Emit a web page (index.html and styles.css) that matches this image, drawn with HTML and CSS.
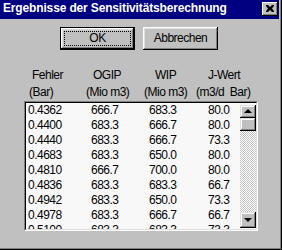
FILE: index.html
```html
<!DOCTYPE html>
<html lang="de">

<head>
    <meta charset="UTF-8">
    <title>Ergebnisse der Sensitivitätsberechnung</title>
    <link rel="stylesheet" href="styles.css">
</head>

<body>
    <div class="window">
        <div class="titlebar">
            <span class="title">Ergebnisse der Sensitivitätsberechnung</span>
            <span class="close">
                <svg width="8" height="7" viewBox="0 0 8 7">
                    <path d="M0 0h2l2 2 2-2h2v1l-2 2.5 2 2.5v1h-2l-2-2-2 2h-2v-1l2-2.5-2-2.5z" fill="#000"/>
                </svg>
            </span>
        </div>

        <div class="content">
            <div class="buttons">
                <button class="btn default"><span class="focus">OK</span></button>
                <button class="btn">Abbrechen</button>
            </div>

            <div class="headers">
                <div class="h1c">Fehler</div>
                <div class="h2c">OGIP</div>
                <div class="h3c">WIP</div>
                <div class="h4c">J-Wert</div>
                <div class="u1c">(Bar)</div>
                <div class="u2c">(Mio m3)</div>
                <div class="u3c">(Mio m3)</div>
                <div class="u4c">(m3/d&nbsp; Bar)</div>
            </div>

            <div class="listbox">
                <div class="list-inner">
                    <div class="rows">
                        <div class="row"><span>0.4362</span><span>666.7</span><span>683.3</span><span>80.0</span></div>
                        <div class="row"><span>0.4400</span><span>683.3</span><span>666.7</span><span>80.0</span></div>
                        <div class="row"><span>0.4440</span><span>683.3</span><span>666.7</span><span>73.3</span></div>
                        <div class="row"><span>0.4683</span><span>683.3</span><span>650.0</span><span>80.0</span></div>
                        <div class="row"><span>0.4810</span><span>666.7</span><span>700.0</span><span>80.0</span></div>
                        <div class="row"><span>0.4836</span><span>683.3</span><span>683.3</span><span>66.7</span></div>
                        <div class="row"><span>0.4942</span><span>683.3</span><span>650.0</span><span>73.3</span></div>
                        <div class="row"><span>0.4978</span><span>683.3</span><span>666.7</span><span>66.7</span></div>
                        <div class="row"><span>0.5100</span><span>683.3</span><span>683.3</span><span>73.3</span></div>
                    </div>
                    <div class="scrollbar">
                        <div class="sb-btn"><span class="arrow up"></span></div>
                        <div class="sb-thumb"></div>
                        <div class="sb-track"></div>
                        <div class="sb-btn down-btn"><span class="arrow down"></span></div>
                    </div>
                </div>
            </div>
        </div>
    </div>
</body>

</html>
```

FILE: styles.css
```css
* {
    box-sizing: border-box;
}

body {
    margin: 0;
    width: 282px;
    height: 250px;
    overflow: hidden;
    background: #c0c0c0;
    font-family: "Liberation Sans", Arial, sans-serif;
    font-size: 12px;
    letter-spacing: -0.5px;
    color: #000;
}

.window {
    width: 282px;
    height: 250px;
    background: #c0c0c0;
    border-right: 1px solid #000;
    border-bottom: 1px solid #000;
    padding-right: 1px;
    padding-bottom: 1px;
    box-shadow: inset -1px -1px #808080;
    display: flex;
    flex-direction: column;
}

.titlebar {
    height: 19px;
    margin-right: 1px;
    background: #000080;
    color: #fff;
    display: flex;
    align-items: flex-start;
    justify-content: space-between;
}

.title {
    font-weight: bold;
    line-height: 16px;
    letter-spacing: -0.15px;
    padding-left: 3px;
}

.close {
    width: 16px;
    height: 14px;
    margin-top: 2px;
    margin-right: 1px;
    background: #c0c0c0;
    box-shadow: inset -1px -1px #000, inset 1px 1px #fff, inset -2px -2px #808080;
    display: flex;
    align-items: center;
    justify-content: center;
    padding-bottom: 1px;
}

.content {
    flex: 1;
    display: flex;
    flex-direction: column;
}

.buttons {
    display: flex;
    justify-content: center;
    gap: 8px;
    margin-top: 8px;
    padding-right: 2px;
}

.btn {
    width: 75px;
    height: 23px;
    padding: 0 0 2px;
    font: inherit;
    letter-spacing: inherit;
    color: #000;
    background: #c0c0c0;
    border: none;
    box-shadow: inset -1px -1px #000, inset 1px 1px #fff, inset -2px -2px #808080, inset 2px 2px #dfdfdf;
}

.btn.default {
    border: 1px solid #000;
    padding: 3px;
}

.focus {
    display: flex;
    align-items: center;
    justify-content: center;
    height: 100%;
    border: 1px dotted #000;
    padding-bottom: 1px;
}

.headers {
    display: grid;
    grid-template-columns: 60px 60px 52px 62px;
    grid-auto-rows: 17px;
    line-height: 17px;
    margin-top: 17px;
    margin-left: 24px;
    white-space: nowrap;
}

.h1c { padding-left: 8px; }
.h2c { padding-left: 9px; }
.h3c { padding-left: 11px; }
.h4c { padding-left: 12px; }
.u1c { padding-left: 5px; }
.u2c { padding-left: 2px; }
.u3c { padding-left: 0; }
.u4c { padding-left: 0; }

.listbox {
    width: 234px;
    height: 130px;
    margin-left: 24px;
    margin-top: 0;
    border: 1px solid;
    border-color: #808080 #fff #fff #808080;
}

.list-inner {
    height: 100%;
    border: 1px solid;
    border-color: #000 #dfdfdf #dfdfdf #000;
    background: #f8f8f8;
    display: flex;
    overflow: hidden;
}

.rows {
    flex: 1;
    padding-left: 2px;
    overflow: hidden;
}

.row {
    display: grid;
    grid-template-columns: 63px 58px 59px 30px;
    height: 15px;
    line-height: 15px;
    white-space: nowrap;
}

.scrollbar {
    width: 16px;
    display: flex;
    flex-direction: column;
    padding-top: 2px;
    padding-bottom: 1px;
}

.sb-btn, .sb-thumb {
    background: #c0c0c0;
    box-shadow: inset -1px -1px #000, inset 1px 1px #dfdfdf, inset -2px -2px #808080, inset 2px 2px #fff;
}

.sb-btn {
    height: 13px;
    display: flex;
    align-items: center;
    justify-content: center;
}

.down-btn {
    height: 16px;
}

.sb-thumb {
    height: 13px;
}

.sb-track {
    flex: 1;
    background: repeating-conic-gradient(#c0c0c0 0 25%, #fff 0 50%) 0 0 / 2px 2px;
}

.arrow {
    width: 0;
    height: 0;
    border-left: 4px solid transparent;
    border-right: 4px solid transparent;
}

.arrow.up {
    border-bottom: 4px solid #000;
    margin-bottom: 1px;
}

.arrow.down {
    border-top: 4px solid #000;
}
```
